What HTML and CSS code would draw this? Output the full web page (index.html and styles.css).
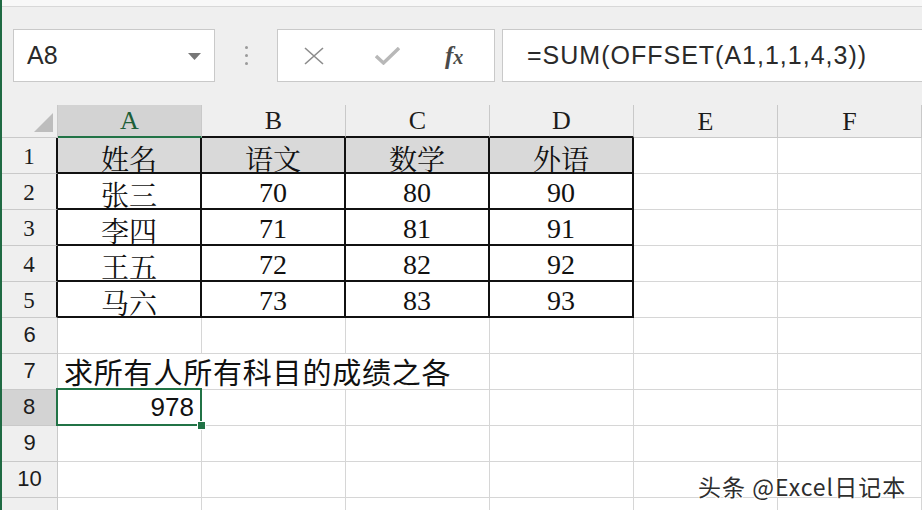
FILE: index.html
```html
<!DOCTYPE html>
<html lang="zh-CN">
<head>
    <meta charset="UTF-8">
    <title>OFFSET</title>
    <link rel="stylesheet" href="styles.css">
</head>
<body>

<div class="titlebar"></div>

<div class="formula-bar">
    <div class="name-box">
        <span>A8</span>
        <svg class="caret" width="13" height="7" viewBox="0 0 13 7"><path d="M0 0 L13 0 L6.5 7 Z" fill="#777"/></svg>
    </div>
    <div class="grip"><i></i><i></i><i></i></div>
    <div class="fx-buttons">
        <svg class="btn-x" width="20" height="18" viewBox="0 0 20 18"><path d="M1 1 L19 17 M19 1 L1 17" stroke="#8c8c8c" stroke-width="1.6" fill="none"/></svg>
        <svg class="btn-ok" width="25" height="18" viewBox="0 0 25 18"><path d="M1 9 L8.5 16 L24 1" stroke="#b8b8b8" stroke-width="3.4" fill="none"/></svg>
        <span class="fx">f<small>x</small></span>
    </div>
    <div class="formula">=SUM(OFFSET(A1,1,1,4,3))</div>
</div>

<div class="sheet">
    <div class="corner"><svg width="19" height="19" viewBox="0 0 19 19"><path d="M19 0 L19 19 L0 19 Z" fill="#bdbdbd"/></svg></div>
    <div class="col-head active">A</div>
    <div class="col-head edge">B</div>
    <div class="col-head edge">C</div>
    <div class="col-head edge">D</div>
    <div class="col-head">E</div>
    <div class="col-head">F</div>

    <div class="row-head edge">1</div>
    <div class="cell tbl head cjk">姓名</div>
    <div class="cell tbl head cjk">语文</div>
    <div class="cell tbl head cjk">数学</div>
    <div class="cell tbl head cjk">外语</div>
    <div class="cell"></div>
    <div class="cell"></div>

    <div class="row-head edge">2</div>
    <div class="cell tbl cjk">张三</div>
    <div class="cell tbl num">70</div>
    <div class="cell tbl num">80</div>
    <div class="cell tbl num">90</div>
    <div class="cell"></div>
    <div class="cell"></div>

    <div class="row-head edge">3</div>
    <div class="cell tbl cjk">李四</div>
    <div class="cell tbl num">71</div>
    <div class="cell tbl num">81</div>
    <div class="cell tbl num">91</div>
    <div class="cell"></div>
    <div class="cell"></div>

    <div class="row-head edge">4</div>
    <div class="cell tbl cjk">王五</div>
    <div class="cell tbl num">72</div>
    <div class="cell tbl num">82</div>
    <div class="cell tbl num">92</div>
    <div class="cell"></div>
    <div class="cell"></div>

    <div class="row-head edge">5</div>
    <div class="cell tbl cjk">马六</div>
    <div class="cell tbl num">73</div>
    <div class="cell tbl num">83</div>
    <div class="cell tbl num">93</div>
    <div class="cell"></div>
    <div class="cell"></div>

    <div class="row-head sans">6</div>
    <div class="cell"></div>
    <div class="cell"></div>
    <div class="cell"></div>
    <div class="cell"></div>
    <div class="cell"></div>
    <div class="cell"></div>

    <div class="row-head sans">7</div>
    <div class="cell note">求所有人所有科目的成绩之各</div>
    <div class="cell"></div>
    <div class="cell"></div>
    <div class="cell"></div>

    <div class="row-head sans active">8</div>
    <div class="cell sel">978</div>
    <div class="cell"></div>
    <div class="cell"></div>
    <div class="cell"></div>
    <div class="cell"></div>
    <div class="cell"></div>

    <div class="row-head sans">9</div>
    <div class="cell"></div>
    <div class="cell"></div>
    <div class="cell"></div>
    <div class="cell"></div>
    <div class="cell"></div>
    <div class="cell"></div>

    <div class="row-head sans">10</div>
    <div class="cell"></div>
    <div class="cell"></div>
    <div class="cell"></div>
    <div class="cell"></div>
    <div class="cell"></div>
    <div class="cell"></div>

    <div class="row-head"></div>
    <div class="cell"></div>
    <div class="cell"></div>
    <div class="cell"></div>
    <div class="cell"></div>
    <div class="cell"></div>
    <div class="cell"></div>
</div>

<div class="watermark">头条 @Excel日记本</div>

</body>
</html>
```

FILE: styles.css
```css
html, body {
    margin: 0;
    padding: 0;
}
body {
    width: 920px;
    height: 510px;
    overflow: hidden;
    border-left: 2px solid #1f6a43;
    background-color: #efefef;
    font-family: 'Liberation Sans', 'Noto Sans CJK SC', sans-serif;
    color: #222;
    position: relative;
}
.titlebar {
    height: 6px;
    background-color: #f8f8f8;
    border-bottom: 1px solid #d8d8d8;
}
.formula-bar {
    height: 98px;
    box-sizing: border-box;
    padding: 22px 0 0 11px;
    display: flex;
    align-items: flex-start;
}
.name-box, .fx-buttons, .formula {
    height: 53px;
    box-sizing: border-box;
    background: white;
    border: 1px solid #c9c9c9;
    display: flex;
    align-items: center;
}
.name-box {
    width: 202px;
    padding: 0 13px 0 13px;
    justify-content: space-between;
    font-size: 25px;
    color: #2a2a2a;
}
.caret {
    margin-top: 2px;
}
.grip {
    width: 62px;
    height: 53px;
    display: flex;
    flex-direction: column;
    align-items: center;
    justify-content: center;
    gap: 5px;
}
.grip i {
    width: 3px;
    height: 3px;
    border-radius: 50%;
    background-color: #9a9a9a;
}
.fx-buttons {
    width: 218px;
    padding-left: 26px;
}
.btn-x {
    margin-right: 51px;
}
.btn-ok {
    margin-right: 45px;
}
.fx {
    font-family: 'Liberation Serif', serif;
    font-style: italic;
    font-weight: bold;
    font-size: 25px;
    color: #4a4a4a;
}
.fx small {
    font-size: 20px;
}
.formula {
    flex: 1;
    margin-left: 7px;
    margin-right: -10px;
    padding-left: 24px;
    font-size: 25px;
    letter-spacing: 1px;
    color: #2a2a2a;
}

.sheet {
    display: grid;
    grid-template-columns: 56px repeat(6, 144px);
    grid-template-rows: 33px repeat(11, 36px);
}
.sheet > div {
    box-sizing: border-box;
    display: flex;
    justify-content: center;
    align-items: flex-end;
}
.corner {
    border-right: 1px solid #c9c9c9;
    border-bottom: 1px solid #c9c9c9;
    padding: 0 4px 5px 0;
    justify-content: flex-end !important;
}
.col-head {
    border-right: 1px solid #c9c9c9;
    border-bottom: 1px solid #c9c9c9;
    font-family: 'Liberation Serif', serif;
    font-size: 26px;
    line-height: 1;
    padding-bottom: 2px;
    color: #1c1c1c;
}
.col-head.edge {
    border-bottom: 2px solid #111;
}
.col-head.active {
    background-color: #d3d3d3;
    border-bottom: 2px solid #217346;
    color: #1d5e38;
}
.row-head {
    border-right: 1px solid #c9c9c9;
    border-bottom: 1px solid #c9c9c9;
    font-family: 'Liberation Serif', serif;
    font-size: 23px;
    line-height: 1;
    padding-bottom: 5px;
    color: #1c1c1c;
}
.row-head.edge {
    border-right: 2px solid #111;
}
.row-head.sans {
    font-family: 'Liberation Sans', sans-serif;
    font-size: 22px;
    padding-bottom: 7px;
}
.row-head.active {
    background-color: #d3d3d3;
    border-right: 2px solid #217346;
}
.cell {
    background-color: white;
    border-right: 1px solid #d6d6d6;
    border-bottom: 1px solid #d6d6d6;
}
.cell.tbl {
    border-right: 2px solid #111;
    border-bottom: 2px solid #111;
}
.cell.head {
    background-color: #d9d9d9;
}
.cjk {
    font-family: 'Noto Serif CJK SC', 'Noto Sans CJK SC', serif;
    font-size: 28px;
    line-height: 28px;
    color: #111;
}
.num {
    font-family: 'Liberation Serif', serif;
    font-size: 28px;
    line-height: 1;
    padding-bottom: 1px;
    color: #111;
}
.note {
    grid-column: span 3;
    justify-content: flex-start !important;
    padding: 0 0 3px 6px;
    font-family: 'Noto Sans CJK SC', sans-serif;
    font-size: 29px;
    line-height: 30px;
    letter-spacing: 0.8px;
    white-space: nowrap;
    color: #111;
}
.sel {
    position: relative;
    justify-content: flex-end !important;
    padding: 0 7px 5px 0;
    font-size: 26px;
    line-height: 1;
    color: #111;
}
.sel::before {
    content: '';
    position: absolute;
    top: -2px;
    left: -2px;
    right: -1px;
    bottom: -1px;
    border: 2px solid #217346;
}
.sel::after {
    content: '';
    position: absolute;
    right: -5px;
    bottom: -5px;
    width: 7px;
    height: 7px;
    background-color: #217346;
    border: 1px solid white;
}

.watermark {
    position: absolute;
    left: 696px;
    top: 469px;
    font-family: 'Noto Sans CJK SC', sans-serif;
    font-size: 23px;
    letter-spacing: 1px;
    color: #2e2e2e;
    text-shadow: 1px 1px 0 #fff, -1px -1px 0 #fff, 1px -1px 0 #fff, -1px 1px 0 #fff;
}
```
